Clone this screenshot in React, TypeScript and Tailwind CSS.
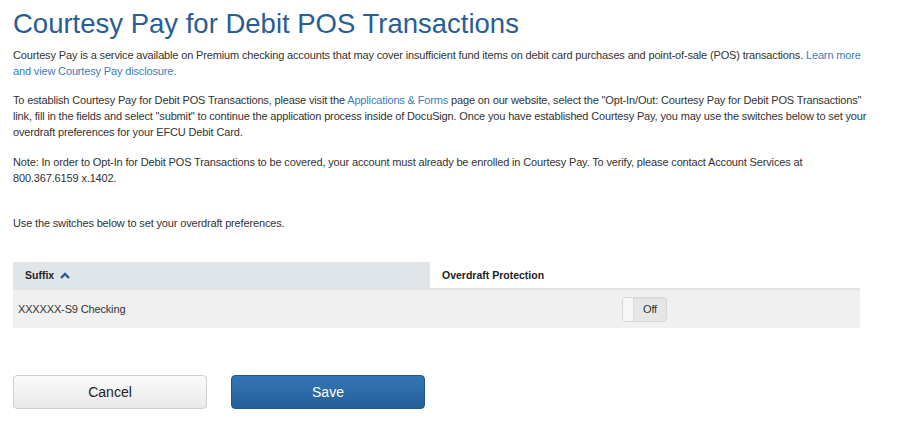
export default function App() {
  return (
    <div className="w-[900px] h-[426px] bg-white px-[13px] pt-[8px] font-['Liberation_Sans',Arial,sans-serif] text-[11px] tracking-[-0.15px] leading-[16px] text-[#333]">
      <h1 className="text-[27.5px] leading-[32px] tracking-normal text-[#2a5d94]">Courtesy Pay for Debit POS Transactions</h1>
      <p className="mt-[7px] pr-[12px]">
        Courtesy Pay is a service available on Premium checking accounts that may cover insufficient fund items on debit card purchases and point-of-sale (POS) transactions.{' '}
        <a className="text-[#3a7cc0]">Learn more and view Courtesy Pay disclosure.</a>
      </p>
      <p className="mt-[13px] pr-[12px]">
        To establish Courtesy Pay for Debit POS Transactions, please visit the{' '}
        <a className="text-[#3a7cc0]">Applications &amp; Forms</a> page on our website, select the "Opt-In/Out: Courtesy Pay for Debit POS Transactions" link, fill in the fields and select "submit" to continue the application process inside of DocuSign. Once you have established Courtesy Pay, you may use the switches below to set your overdraft preferences for your EFCU Debit Card.
      </p>
      <p className="mt-[14px] pr-[80px]">
        Note: In order to Opt-In for Debit POS Transactions to be covered, your account must already be enrolled in Courtesy Pay. To verify, please contact Account Services at 800.367.6159 x.1402.
      </p>
      <p className="mt-[29px]">Use the switches below to set your overdraft preferences.</p>

      <div className="mt-[31px] w-[847px]">
        <div className="flex h-[28px] border-b-2 border-[#e2e2e2]">
          <div className="w-[417px] bg-[#dfe5e9] flex items-center pl-[12px] font-bold text-[10.5px] tracking-normal text-[#222]">
            Suffix
            <svg className="ml-[6px]" width="10" height="7" viewBox="0 0 10 7">
              <path d="M1 6 L5 2 L9 6" stroke="#2a5d94" strokeWidth="2.4" fill="none" />
            </svg>
          </div>
          <div className="flex-1 flex items-center pl-[12px] font-bold text-[10.5px] tracking-normal text-[#222]">Overdraft Protection</div>
        </div>
        <div className="flex h-[38px] bg-[#f0f0f0] items-center">
          <div className="w-[417px] pl-[5px]">XXXXXX-S9 Checking</div>
          <div className="flex-1 flex justify-center pr-[1px]">
            <div className="flex w-[45px] h-[25px] rounded-[4px] border border-[#d6d6d6] bg-[#e6e6e6] overflow-hidden shadow-[inset_0_1px_1px_rgba(0,0,0,0.05)]">
              <div className="w-[11px] bg-[#f6f6f6] border-r border-[#dcdcdc]" />
              <div className="flex-1 flex items-center justify-center text-[11px] text-[#333]">Off</div>
            </div>
          </div>
        </div>
      </div>

      <div className="mt-[47px] flex gap-[24px]">
        <button className="w-[194px] h-[34px] rounded-[4px] border border-[#d0d0d0] bg-gradient-to-b from-[#fbfbfb] to-[#e9e9e9] text-[14px] tracking-normal text-[#222]">
          Cancel
        </button>
        <button className="w-[194px] h-[34px] rounded-[4px] border border-[#1f5488] bg-gradient-to-b from-[#3575b5] to-[#255f9a] text-[14px] tracking-normal text-white">
          Save
        </button>
      </div>
    </div>
  );
}
